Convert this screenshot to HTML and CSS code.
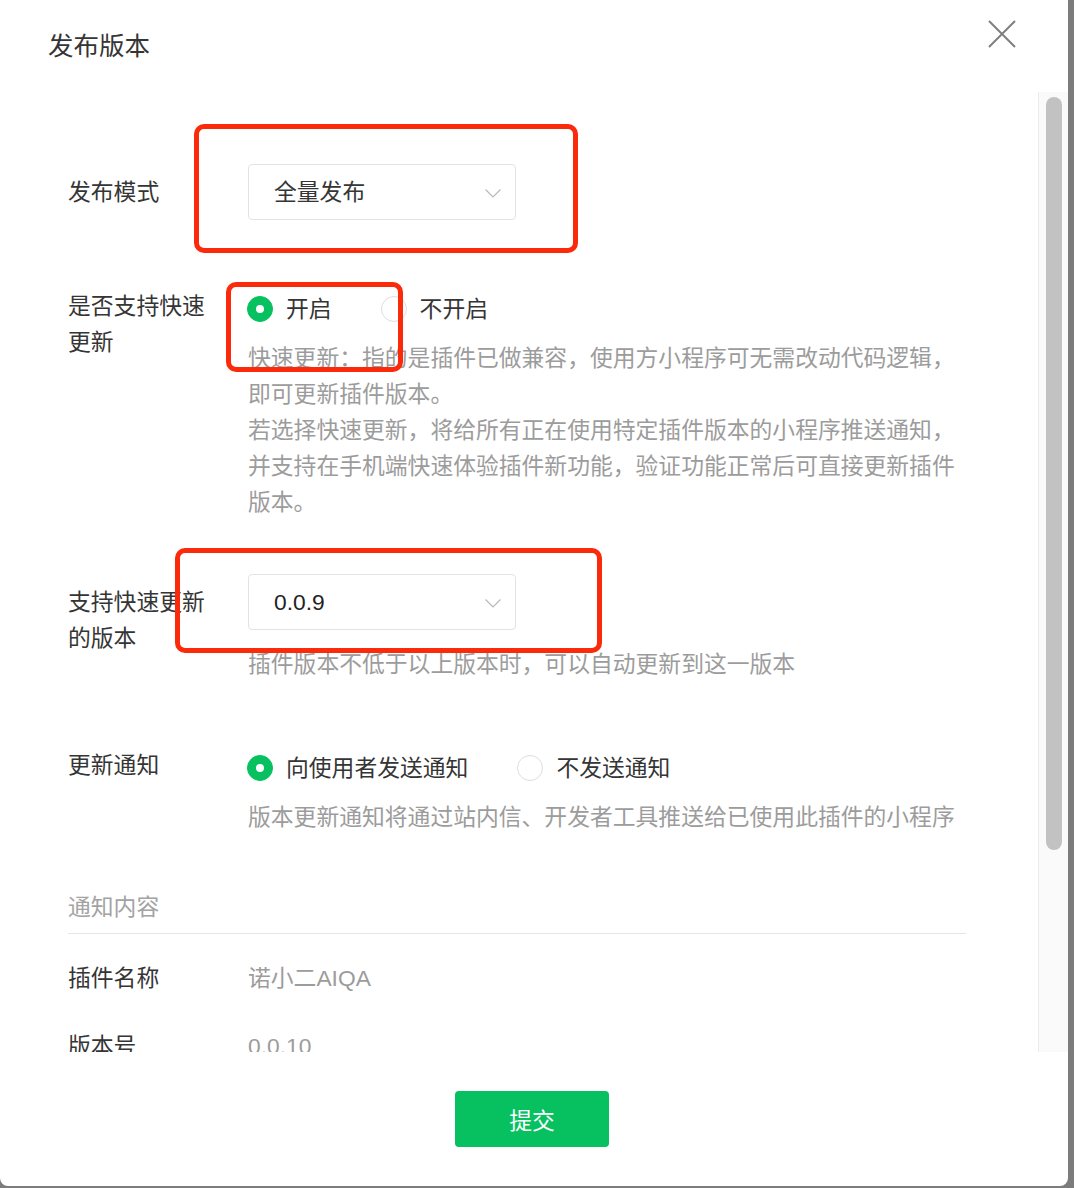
FILE: index.html
```html
<!DOCTYPE html>
<html lang="zh-CN">
<head>
  <meta charset="UTF-8" />
  <title>发布版本</title>
  <meta name="viewport" content="width=device-width, initial-scale=1.0" />
  <link rel="stylesheet" href="styles.css">
</head>
<body>
  <div class="dialog">
    <div class="dialog-header">
      <h2 class="dialog-title">发布版本</h2>
      <button class="close-btn" aria-label="关闭">
        <svg width="28" height="28" viewBox="0 0 28 28"><path d="M1 1L27 27M27 1L1 27" stroke="#7f7f7f" stroke-width="2" fill="none"/></svg>
      </button>
    </div>

    <div class="dialog-body">
      <div class="body-content">
        <div class="form-row row-mode">
          <div class="form-label label-select">发布模式</div>
          <div class="form-control">
            <div class="select">
              <span>全量发布</span>
              <svg class="chevron" width="16" height="9" viewBox="0 0 16 9"><polyline points="0.5,0.5 8,8 15.5,0.5" stroke="#b8b8b8" stroke-width="1.2" fill="none"/></svg>
            </div>
          </div>
        </div>

        <div class="form-row row-fast">
          <div class="form-label">是否支持快速更新</div>
          <div class="form-control">
            <div class="radio-group">
              <label class="radio"><span class="radio-dot checked"></span>开启</label>
              <label class="radio"><span class="radio-dot"></span>不开启</label>
            </div>
            <div class="hint">快速更新：指的是插件已做兼容，使用方小程序可无需改动代码逻辑，即可更新插件版本。<br>若选择快速更新，将给所有正在使用特定插件版本的小程序推送通知，并支持在手机端快速体验插件新功能，验证功能正常后可直接更新插件版本。</div>
          </div>
        </div>

        <div class="form-row row-version">
          <div class="form-label label-select">支持快速更新的版本</div>
          <div class="form-control">
            <div class="select">
              <span class="select-num">0.0.9</span>
              <svg class="chevron" width="16" height="9" viewBox="0 0 16 9"><polyline points="0.5,0.5 8,8 15.5,0.5" stroke="#b8b8b8" stroke-width="1.2" fill="none"/></svg>
            </div>
            <div class="hint hint-select">插件版本不低于以上版本时，可以自动更新到这一版本</div>
          </div>
        </div>

        <div class="form-row row-notice">
          <div class="form-label">更新通知</div>
          <div class="form-control">
            <div class="radio-group">
              <label class="radio"><span class="radio-dot checked"></span>向使用者发送通知</label>
              <label class="radio"><span class="radio-dot"></span>不发送通知</label>
            </div>
            <div class="hint">版本更新通知将通过站内信、开发者工具推送给已使用此插件的小程序</div>
          </div>
        </div>

        <div class="section-title">通知内容</div>

        <div class="info-row">
          <div class="form-label">插件名称</div>
          <div class="info-value">诺小二AIQA</div>
        </div>
        <div class="info-row">
          <div class="form-label">版本号</div>
          <div class="info-value">0.0.10</div>
        </div>
      </div>

      <div class="scrollbar"><div class="scroll-thumb"></div></div>
    </div>

    <div class="dialog-footer">
      <button class="submit-btn">提交</button>
    </div>

    <!-- red review marks drawn over the form -->
    <div class="mark mark-mode"></div>
    <div class="mark mark-fast"></div>
    <div class="mark mark-version"></div>
  </div>
</body>
</html>
```

FILE: styles.css
```css
* { box-sizing: border-box; }
body {
  margin: 0;
  background: #7c7c7c;
  font-family: "Liberation Sans", "Noto Sans CJK SC", sans-serif;
  color: #353535;
}
button { font-family: inherit; }

.dialog {
  position: relative;
  width: 1068px;
  height: 1186px;
  background: #fff;
  border-radius: 0 0 8px 8px;
  display: flex;
  flex-direction: column;
  overflow: hidden;
}

.dialog-header {
  height: 92px;
  flex: none;
  display: flex;
  justify-content: space-between;
  align-items: flex-start;
  padding: 0 52px 0 48px;
}
.dialog-title {
  margin: 28px 0 0;
  font-size: 25.5px;
  font-weight: normal;
  line-height: 36px;
  color: #353535;
}
.close-btn {
  margin-top: 20px;
  width: 28px;
  height: 28px;
  padding: 0;
  border: none;
  background: none;
  cursor: pointer;
}
.close-btn svg { display: block; }

.dialog-body {
  height: 960px;
  flex: none;
  display: flex;
}
.body-content {
  flex: 1;
  overflow: hidden;
  padding: 72px 72px 0 68px;
  font-size: 22.8px;
  line-height: 36px;
}

.scrollbar {
  width: 30px;
  flex: none;
  background: #fafafa;
  border-left: 1px solid #ececec;
  padding: 5px 0 0 7px;
}
.scroll-thumb {
  width: 16px;
  height: 753px;
  border-radius: 8px;
  background: #c2c2c2;
}

.form-row { display: flex; }
.row-mode { margin-bottom: 68px; }
.row-fast { margin-bottom: 54px; }
.row-version { margin-bottom: 65px; }
.row-notice { margin-bottom: 54px; }

.form-label {
  width: 140px;
  flex: none;
  margin-right: 40px;
  color: #353535;
}
.label-select { padding-top: 10px; }
.form-control { flex: 1; min-width: 0; }

.select {
  width: 268px;
  height: 56px;
  border: 1px solid #e3e3e3;
  border-radius: 4px;
  display: flex;
  align-items: center;
  justify-content: space-between;
  padding: 0 14px 0 25px;
  color: #353535;
}
.select-num { color: #222; }
.chevron { display: block; margin-top: 2px; }

.radio-group { display: flex; margin-top: 3px; margin-left: -1px; }
.radio {
  display: flex;
  align-items: center;
  margin-right: 49px;
  color: #353535;
  cursor: pointer;
}
.radio-dot {
  position: relative;
  width: 26px;
  height: 26px;
  margin-right: 13px;
  border-radius: 50%;
  border: 1px solid #dedede;
  background: #fff;
}
.radio-dot.checked {
  background: #07c160;
  border-color: #07c160;
}
.radio-dot.checked::after {
  content: "";
  position: absolute;
  left: 50%;
  top: 50%;
  width: 8px;
  height: 8px;
  margin: -4px 0 0 -4px;
  border-radius: 50%;
  background: #fff;
}

.hint { margin-top: 13px; color: #9c9c9c; }
.hint-select { margin-top: 16px; }

.section-title {
  color: #a3a3a3;
  padding-bottom: 8px;
  border-bottom: 1px solid #e6e6e6;
  margin-bottom: 26px;
}
.info-row { display: flex; margin-bottom: 32px; }
.info-value { color: #9c9c9c; }

.dialog-footer {
  flex: 1;
  display: flex;
  align-items: center;
  justify-content: center;
  padding-right: 4px;
}
.submit-btn {
  width: 154px;
  height: 56px;
  border: none;
  border-radius: 4px;
  background: #07c160;
  color: #fff;
  font-size: 22.8px;
  cursor: pointer;
}

.mark {
  position: absolute;
  border: 5px solid #fb2a0b;
  border-radius: 10px;
  pointer-events: none;
}
.mark-mode { left: 194px; top: 124px; width: 384px; height: 129px; }
.mark-fast { left: 226px; top: 282px; width: 177px; height: 90px; }
.mark-version { left: 175px; top: 548px; width: 427px; height: 105px; }
```
